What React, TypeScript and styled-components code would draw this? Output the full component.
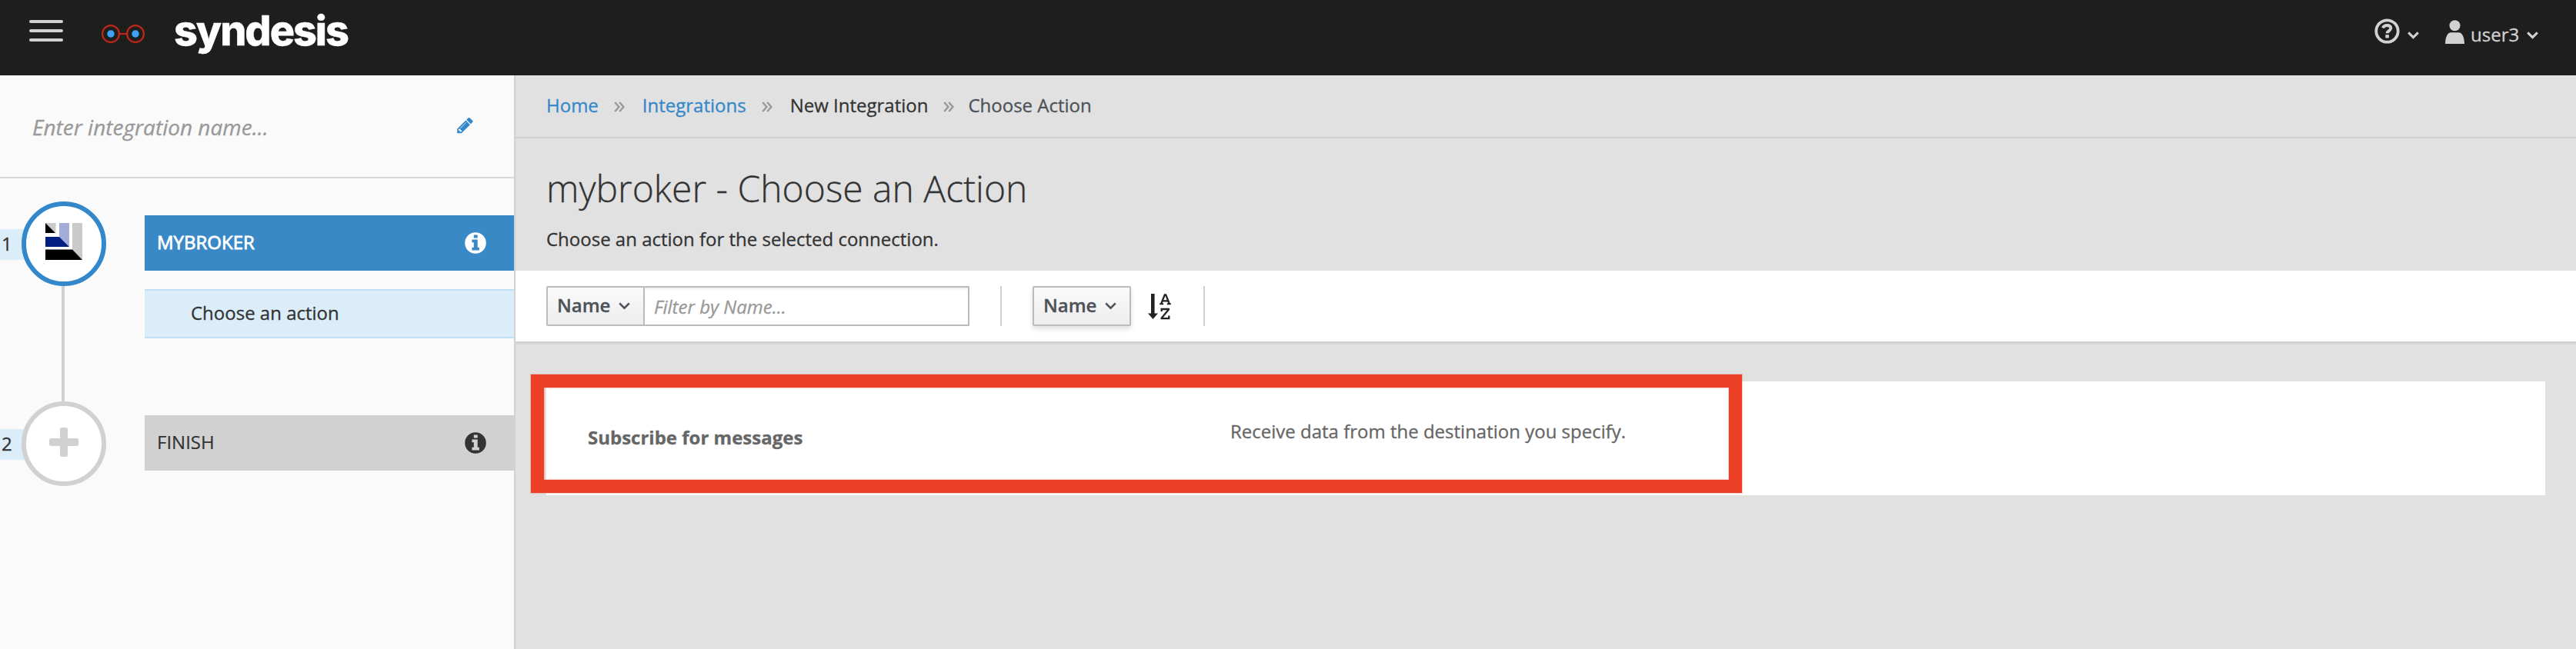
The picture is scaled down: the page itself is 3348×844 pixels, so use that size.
import React from 'react';
import styled, { createGlobalStyle } from 'styled-components';

const blue = '#3a89c7';
const grey = '#d1d1d1';

const GlobalStyle = createGlobalStyle`
  * { box-sizing: border-box; }
  body {
    margin: 0;
    background: #e1e1e1;
    color: #333;
    font: 400 24px/40px "Open Sans", sans-serif;
    -webkit-text-stroke: 0.3px currentColor;
  }
  svg { display: block; flex: none; }
`;

const Page = styled.div`
  display: flex;
  flex-direction: column;
  height: 844px;
  overflow: hidden;
`;

/* Masthead */
const Masthead = styled.header`
  display: flex;
  align-items: flex-start;
  height: 98px;
  flex: none;
  padding: 0 49px 0 38px;
  background: #1e1e1e;
  color: ${grey};
`;
const MenuButton = styled.div`
  display: flex;
  flex-direction: column;
  gap: 8px;
  width: 44px;
  margin: 26px 50px 0 0;
`;
const MenuBar = styled.span`
  height: 4px;
  border-radius: 2px;
  background: ${grey};
`;
const GlassesMark = styled.svg`
  margin-top: 31px;
`;
const Wordmark = styled.span`
  margin: 10px 0 0 38px;
  color: #fff;
  font: 800 54px/60px Inter, sans-serif;
  letter-spacing: -2.1px;
`;
const Utilities = styled.nav`
  display: flex;
  align-items: flex-start;
  margin-left: auto;
`;
const HelpIcon = styled.svg`
  margin: 24px 10px 0 0;
`;
const UserIcon = styled.svg`
  margin: 26px 8px 0 34px;
`;
const UserName = styled.span`
  margin-top: 25px;
  width: 73px;
`;
const MastheadChevron = styled.span`
  margin-top: 41px;
`;

/* Body */
const Body = styled.div`
  display: flex;
  flex: 1;
`;
const Sidebar = styled.aside`
  width: 670px;
  flex: none;
  border-right: 2px solid ${grey};
  background: #fafafa;
`;
const NameRow = styled.div`
  display: flex;
  justify-content: space-between;
  height: 134px;
  padding: 47px 53px 0 42px;
  border-bottom: 2px solid #d9d9d9;
`;
const NamePlaceholder = styled.span`
  color: #999;
  font-size: 28px;
  font-style: italic;
`;
const PencilIcon = styled.svg`
  margin-top: 6px;
  fill: #3388cb;
`;
const Steps = styled.div`
  padding-top: 30px;
`;
const Step = styled.section`
  display: flex;
`;
const Rail = styled.div`
  width: 188px;
  flex: none;
`;
const Node = styled.div`
  display: flex;
  align-items: flex-start;
`;
const StepNumber = styled.span`
  width: 48px;
  height: 40px;
  margin-top: 36px;
  padding: 0 0 0 2px;
  line-height: 38px;
  background: #daedf8;
`;
const Circle = styled.div<{ $active?: boolean }>`
  display: flex;
  justify-content: center;
  width: 110px;
  height: 110px;
  margin-left: -20px;
  padding-top: ${(p) => (p.$active ? 22 : 28)}px;
  border: 6px solid ${(p) => (p.$active ? '#3388cb' : grey)};
  border-radius: 50%;
  background: #fff;
`;
const Connector = styled.div`
  width: 4px;
  height: 150px;
  margin-left: 80px;
  background: ${grey};
`;
const StepDetail = styled.div`
  flex: 1;
  padding-top: 18px;
`;
const StepBar = styled.div<{ $active?: boolean }>`
  display: flex;
  justify-content: space-between;
  height: 72px;
  padding: 15px 36px 0 16px;
  background: ${(p) => (p.$active ? blue : grey)};
  color: ${(p) => (p.$active ? '#fff' : '#333')};
  -webkit-text-stroke: ${(p) => (p.$active ? 0.8 : 0.2)}px currentColor;
  & > svg { margin-top: 7px; }
`;
const SubStep = styled.div`
  height: 64px;
  margin-top: 24px;
  padding: 9px 0 0 60px;
  border: solid #bedff3;
  border-width: 2px 0;
  background: #daedf8;
`;

const Main = styled.main`
  flex: 1;
  min-width: 0;
`;
const Breadcrumb = styled.nav`
  display: flex;
  height: 82px;
  padding: 19px 40px 0;
  border-bottom: 2px solid ${grey};
`;
const Crumb = styled.span<{ $kind?: 'link' | 'current' }>`
  color: ${(p) => (p.$kind === 'link' ? '#3388cb' : p.$kind === 'current' ? '#4d5258' : '#333')};
`;
const CrumbSeparator = styled.svg<{ $last?: boolean }>`
  margin: 15px ${(p) => (p.$last ? 18 : 23)}px 0 20px;
`;
const Heading = styled.div`
  height: 172px;
  padding: 38px 40px 0;
`;
const Title = styled.h1`
  margin: 0 0 19px;
  font-size: 48px;
  font-weight: 300;
  line-height: 54px;
`;
const Lead = styled.p`
  margin: 0;
`;

const Toolbar = styled.div`
  display: flex;
  height: 94px;
  padding: 20px 40px 0;
  border-bottom: 2px solid #cfcfcf;
  background: #fff;
  box-shadow: 0 2px 0 rgba(3, 3, 3, 0.045);
`;
const SelectButton = styled.button<{ $raised?: boolean }>`
  display: flex;
  justify-content: space-between;
  width: 128px;
  height: 52px;
  padding: 0 17px 4px 12px;
  border: 2px solid #bbb;
  border-radius: ${(p) => (p.$raised ? '2px' : '2px 0 0 2px')};
  background: linear-gradient(#fafafa, #ededed);
  box-shadow: ${(p) => (p.$raised ? '0 4px 6px rgba(3, 3, 3, 0.12)' : 'none')};
  color: #4d5258;
  font: 600 24px/45px "Open Sans", sans-serif;
  & > svg { margin-top: 19px; }
`;
const FilterInput = styled.div`
  width: 424px;
  height: 52px;
  margin-left: -2px;
  padding-left: 12px;
  border: 2px solid #bbb;
  background: #fff;
  box-shadow: inset 0 2px 2px rgba(3, 3, 3, 0.075);
  color: #999;
  font-style: italic;
  line-height: 49px;
`;
const Divider = styled.div`
  width: 2px;
  height: 52px;
  margin: 0 40px;
  background: ${grey};
`;
const SortIcon = styled.svg`
  margin: 9px 2px 0 20px;
`;

const ActionList = styled.div`
  padding: 50px 40px 0;
`;
const ActionRow = styled.article`
  position: relative;
  display: flex;
  height: 148px;
  padding-left: 54px;
  background: #fff;
  color: #666;
`;
const ActionName = styled.strong`
  width: 835px;
  padding-top: 53px;
`;
const ActionDescription = styled.span`
  padding-top: 45px;
`;
const Highlight = styled.div`
  position: absolute;
  top: -9px;
  left: -20px;
  width: 1574px;
  height: 154px;
  border: 17px solid #ee4026;
  box-shadow: 0 0 0 1px rgba(238, 64, 38, 0.25), inset 0 0 0 1px rgba(238, 64, 38, 0.25);
`;

const Chevron = ({ width = 2.6 }: { width?: number }) => (
  <svg width="15" height="10" viewBox="0 0 15 10" fill="none" stroke="currentColor" strokeWidth={width}>
    <path d="M1.2 1.4 7.5 7.6 13.8 1.4" />
  </svg>
);

const InfoIcon = () => (
  <svg width="28" height="28" viewBox="0 0 28 28">
    <path
      fill="currentColor"
      fillRule="evenodd"
      stroke="none"
      d="M14 .2a13.8 13.8 0 1 0 0 27.6 13.8 13.8 0 0 0 0-27.6ZM11.8 3.5h4.9v4h-4.9ZM9.4 9.4h7.3v10.4h2.2v3.8H9.4v-3.8h2.4v-6.6H9.4Z"
    />
  </svg>
);

const DoubleAngle = ({ last }: { last?: boolean }) => (
  <CrumbSeparator $last={last} width="14" height="14" viewBox="0 0 14 14" fill="none" stroke="#999" strokeWidth="2.4">
    <path d="M1.2 1 6.4 7 1.2 13M7.2 1 12.4 7 7.2 13" />
  </CrumbSeparator>
);

export default function App() {
  return (
    <Page>
      <GlobalStyle />
      <Masthead>
        <MenuButton>
          <MenuBar />
          <MenuBar />
          <MenuBar />
        </MenuButton>
        <GlassesMark width="56" height="26" viewBox="0 0 56 26">
          <g fill="none" stroke="#bb271a" strokeWidth="2.2">
            <circle cx="12" cy="13" r="10.9" />
            <circle cx="44" cy="13" r="10.9" />
            <path d="M23 13h10" />
          </g>
          <circle cx="12" cy="13" r="4.7" fill="#3fa2f7" />
          <circle cx="44" cy="13" r="4.7" fill="#3fa2f7" />
        </GlassesMark>
        <Wordmark>syndesis</Wordmark>
        <Utilities>
          <HelpIcon width="33" height="33" viewBox="0 0 33 33" fill="none" stroke="currentColor">
            <circle cx="16.5" cy="16.5" r="14.2" strokeWidth="3.8" />
            <path d="M11 12.4C12 9.9 13.6 9 16.3 9c3 0 5 1.4 5 3.7 0 3.6-4.6 3-4.6 6.6" strokeWidth="3.9" />
            <path d="M16.6 21.2v4.2" strokeWidth="4.6" />
          </HelpIcon>
          <MastheadChevron>
            <Chevron width={3} />
          </MastheadChevron>
          <UserIcon width="25" height="31" viewBox="0 0 25 31" fill="currentColor">
            <circle cx="12.5" cy="7.3" r="7" />
            <path d="M0 31C.3 22 3 16.3 7.5 16.3h10C22 16.3 24.7 22 25 31Z" />
          </UserIcon>
          <UserName>user3</UserName>
          <MastheadChevron>
            <Chevron width={3} />
          </MastheadChevron>
        </Utilities>
      </Masthead>
      <Body>
        <Sidebar>
          <NameRow>
            <NamePlaceholder>Enter integration name...</NamePlaceholder>
            <PencilIcon width="21" height="24" viewBox="0 0 1536 1792">
              <path d="M363 1536l91-91-235-235-91 91v107h128v128h107zM886 608q0-22-22-22-10 0-17 7l-542 542q-7 7-7 17 0 22 22 22 10 0 17-7l542-542q7-7 7-17zM832 416l416 416-832 832h-416v-416zM1515 512q0 53-37 90l-166 166-416-416 166-165q36-38 90-38 53 0 91 38l235 234q37 39 37 91z" />
            </PencilIcon>
          </NameRow>
          <Steps>
            <Step>
              <Rail>
                <Node>
                  <StepNumber>1</StepNumber>
                  <Circle $active>
                    <svg width="48" height="48" viewBox="0 0 48 48">
                      <path d="M0 0h13.5v13.5Z" fill="#c9cacc" />
                      <path d="M0 0 13 13H0Z" fill="#000" />
                      <path d="M18 0h13v31L18 18Z" fill="#a3add9" />
                      <path d="M0 18h18l13 13H0Z" fill="#001f80" />
                      <path d="M35 0h13v48L35 35Z" fill="#c9cacc" />
                      <path d="M0 34.5h35L48 48H0Z" fill="#000" />
                    </svg>
                  </Circle>
                </Node>
                <Connector />
              </Rail>
              <StepDetail>
                <StepBar $active>
                  MYBROKER
                  <InfoIcon />
                </StepBar>
                <SubStep>Choose an action</SubStep>
              </StepDetail>
            </Step>
            <Step>
              <Rail>
                <Node>
                  <StepNumber>2</StepNumber>
                  <Circle>
                    <svg width="38" height="38" viewBox="0 0 38 38" fill={grey}>
                      <rect x="14" width="10" height="38" rx="2.5" />
                      <rect y="14" width="38" height="10" rx="2.5" />
                    </svg>
                  </Circle>
                </Node>
              </Rail>
              <StepDetail>
                <StepBar>
                  FINISH
                  <InfoIcon />
                </StepBar>
              </StepDetail>
            </Step>
          </Steps>
        </Sidebar>
        <Main>
          <Breadcrumb>
            <Crumb $kind="link">Home</Crumb>
            <DoubleAngle />
            <Crumb $kind="link">Integrations</Crumb>
            <DoubleAngle />
            <Crumb>New Integration</Crumb>
            <DoubleAngle last />
            <Crumb $kind="current">Choose Action</Crumb>
          </Breadcrumb>
          <Heading>
            <Title>mybroker - Choose an Action</Title>
            <Lead>Choose an action for the selected connection.</Lead>
          </Heading>
          <Toolbar>
            <SelectButton>
              Name
              <Chevron />
            </SelectButton>
            <FilterInput>Filter by Name...</FilterInput>
            <Divider />
            <SelectButton $raised>
              Name
              <Chevron />
            </SelectButton>
            <SortIcon width="32" height="36" viewBox="0 0 32 36" fill="none" stroke="#222">
              <path d="M8.3 1v27" strokeWidth="4.6" />
              <path d="M2 26.5h13L8.500 34Z" fill="#222" stroke="none" />
              <path d="M19.2 14 23.8 2.4h1.4L29.8 14M21 10.4h7.2" strokeWidth="2.3" />
              <path d="M17.2 14.3h5M26.8 14.3h5" strokeWidth="1.9" />
              <path d="M19.7 24v-3h9.2v.6L19.7 32.6v.5h9.6v-3.6" strokeWidth="2.3" />
            </SortIcon>
            <Divider />
          </Toolbar>
          <ActionList>
            <ActionRow>
              <ActionName>Subscribe for messages</ActionName>
              <ActionDescription>Receive data from the destination you specify.</ActionDescription>
              <Highlight />
            </ActionRow>
          </ActionList>
        </Main>
      </Body>
    </Page>
  );
}
